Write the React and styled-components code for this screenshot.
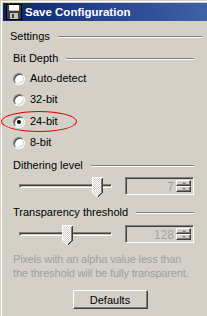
import React from "react";
import styled, { createGlobalStyle } from "styled-components";

const Global = createGlobalStyle`
  html, body { margin: 0; padding: 0; background: #d4d0c8; }
  body { width: 207px; height: 316px; overflow: hidden; font-family: "Liberation Sans", Arial, sans-serif; font-size: 11px; }
`;

const Window = styled.div`
  width: 207px;
  height: 316px;
  box-sizing: border-box;
  background: #d4d0c8;
  border-top: 1px solid #d4d0c8;
  border-left: 1px solid #d4d0c8;
  box-shadow: inset 1px 1px #ffffff;
  padding: 2px 0 0 2px;
  position: relative;
  overflow: hidden;
`;

const TitleBar = styled.div`
  height: 18px;
  display: flex;
  align-items: center;
  gap: 3px;
  padding-left: 3px;
  background: linear-gradient(90deg, #0a246a 0%, #24418a 45%, #3d62a6 100%);
  color: #fff;
  font-weight: bold;
  font-size: 11.5px;
  white-space: nowrap;
`;

const Body = styled.div`
  display: flex;
  flex-direction: column;
  padding: 9px 5px 0 7px;
`;

const Header = styled.div`
  display: flex;
  align-items: center;
  gap: 8px;
  height: 13px;
  margin-top: ${(p) => p.$mt || 0}px;
  line-height: 13px;
  color: #000;
  white-space: nowrap;
`;

const Line = styled.div`
  flex: 1;
  height: 0;
  border-top: 1px solid #808080;
  border-bottom: 1px solid #ffffff;
`;

const Inner = styled.div`
  display: flex;
  flex-direction: column;
  padding-left: 3px;
  padding-right: 8px;
`;

const RadioRow = styled.div`
  position: relative;
  display: flex;
  align-items: center;
  gap: 5px;
  height: 13px;
  margin-top: ${(p) => p.$mt}px;
  line-height: 13px;
`;

const RadioCircle = styled.span`
  width: 12px;
  height: 12px;
  box-sizing: border-box;
  border-radius: 50%;
  border: 1px solid;
  border-color: #808080 #ffffff #ffffff #808080;
  box-shadow: inset 1px 1px #404040, inset -1px -1px #d4d0c8;
  background: #fff;
  display: flex;
  align-items: center;
  justify-content: center;
  &::after {
    content: "";
    width: 4px;
    height: 4px;
    border-radius: 50%;
    background: ${(p) => (p.$checked ? "#000" : "transparent")};
  }
`;

const Ellipse = styled.div`
  position: absolute;
  left: -12px;
  top: -4px;
  width: 74px;
  height: 19px;
  border: 1px solid #e00000;
  border-radius: 50%;
  pointer-events: none;
`;

const SliderRow = styled.div`
  display: flex;
  align-items: flex-start;
  height: 21px;
  margin-top: ${(p) => p.$mt}px;
`;

const Track = styled.div`
  position: relative;
  margin-left: 6px;
  width: 93px;
  height: 21px;
  &::before {
    content: "";
    position: absolute;
    left: 0;
    right: 0;
    top: 7px;
    box-sizing: border-box;
    height: 4px;
    border-top: 1px solid #808080;
    border-left: 1px solid #808080;
    border-bottom: 1px solid #ffffff;
    border-right: 1px solid #ffffff;
    box-shadow: inset 1px 1px #404040;
  }
`;

const Thumb = styled.svg`
  position: absolute;
  top: 0;
`;

const Spin = styled.div`
  margin-left: auto;
  display: flex;
  width: 69px;
  height: 18px;
  box-sizing: border-box;
  border: 1px solid;
  border-color: #808080 #ffffff #ffffff #808080;
  box-shadow: inset 1px 1px #404040, inset -1px -1px #d4d0c8;
  padding: 2px;
`;

const SpinValue = styled.div`
  flex: 1;
  text-align: right;
  color: #a0a0a0;
  font-size: 12px;
  line-height: 14px;
  padding-right: 2px;
`;

const SpinButtons = styled.div`
  width: 15px;
  display: flex;
  flex-direction: column;
`;

const SpinBtn = styled.div`
  flex: 1;
  box-sizing: border-box;
  background: #d4d0c8;
  border: 1px solid;
  border-color: #ffffff #404040 #404040 #ffffff;
  box-shadow: inset -1px -1px #808080;
  display: flex;
  align-items: center;
  justify-content: center;
`;

const Arrow = styled.span`
  width: 0;
  height: 0;
  border-left: 2px solid transparent;
  border-right: 2px solid transparent;
  ${(p) => (p.$down ? "border-top: 2px solid #808080;" : "border-bottom: 2px solid #808080;")}
`;

const Note = styled.div`
  margin-top: ${(p) => p.$mt}px;
  color: #a0a0a0;
  line-height: 14px;
  white-space: nowrap;
  letter-spacing: -0.15px;
`;

const ButtonRow = styled.div`
  display: flex;
  justify-content: center;
  margin-top: 10px;
  padding-left: 8px;
`;

const Button = styled.div`
  width: 75px;
  height: 19px;
  box-sizing: border-box;
  border: 1px solid;
  border-color: #ffffff #404040 #404040 #ffffff;
  box-shadow: inset -1px -1px #808080;
  display: flex;
  align-items: center;
  justify-content: center;
  color: #000;
`;

function Floppy() {
  return (
    <svg width="16" height="16" viewBox="0 0 16 16" shapeRendering="crispEdges">
      <rect x="0" y="0" width="16" height="16" fill="#000" />
      <rect x="1" y="1" width="14" height="14" fill="#404040" />
      <rect x="3" y="1" width="10" height="6" fill="#ffffff" />
      <rect x="3" y="6" width="10" height="1" fill="#c0c0c0" />
      <rect x="4" y="9" width="8" height="6" fill="#c0c0c0" />
      <rect x="6" y="10" width="2" height="4" fill="#404040" />
    </svg>
  );
}

function SliderThumb({ left }) {
  return (
    <Thumb width="11" height="21" viewBox="0 0 11 21" style={{ left }} shapeRendering="crispEdges">
      <defs>
        <pattern id="dith" width="2" height="2" patternUnits="userSpaceOnUse">
          <rect width="2" height="2" fill="#ffffff" />
          <rect width="1" height="1" fill="#d4d0c8" />
          <rect x="1" y="1" width="1" height="1" fill="#d4d0c8" />
        </pattern>
      </defs>
      <polygon points="0.5,0.5 10.5,0.5 10.5,15.5 5.5,20.5 0.5,15.5" fill="url(#dith)" stroke="none" />
      <polyline points="0.5,15.5 0.5,0.5 10.5,0.5" fill="none" stroke="#ffffff" />
      <polyline points="10.5,0.5 10.5,15.5 5.5,20.5" fill="none" stroke="#404040" />
      <polyline points="9.5,1.5 9.5,15.5 5.5,19.5" fill="none" stroke="#808080" />
      <polyline points="0.5,15.5 5.5,20.5" fill="none" stroke="#ffffff" />
    </Thumb>
  );
}

function SpinBox({ value }) {
  return (
    <Spin>
      <SpinValue>{value}</SpinValue>
      <SpinButtons>
        <SpinBtn><Arrow /></SpinBtn>
        <SpinBtn><Arrow $down /></SpinBtn>
      </SpinButtons>
    </Spin>
  );
}

const radios = [
  { label: "Auto-detect", mt: 7 },
  { label: "32-bit", mt: 8 },
  { label: "24-bit", mt: 9, checked: true },
  { label: "8-bit", mt: 8 },
];

export default function App() {
  return (
    <>
      <Global />
      <Window>
        <TitleBar>
          <Floppy />
          <span>Save Configuration</span>
        </TitleBar>
        <Body>
          <Header>
            <span>Settings</span>
            <Line />
          </Header>
          <Inner>
            <Header $mt={9}>
              <span>Bit Depth</span>
              <Line />
            </Header>
            {radios.map((r) => (
              <RadioRow key={r.label} $mt={r.mt}>
                {r.checked && <Ellipse />}
                <RadioCircle $checked={r.checked} />
                <span>{r.label}</span>
              </RadioRow>
            ))}
            <Header $mt={10}>
              <span>Dithering level</span>
              <Line />
            </Header>
            <SliderRow $mt={5}>
              <Track>
                <SliderThumb left={73} />
              </Track>
              <SpinBox value="7" />
            </SliderRow>
            <Header $mt={8}>
              <span>Transparency threshold</span>
              <Line />
            </Header>
            <SliderRow $mt={6}>
              <Track>
                <SliderThumb left={43} />
              </Track>
              <SpinBox value="128" />
            </SliderRow>
            <Note $mt={6}>
              Pixels with an alpha value less than
              <br />
              the threshold will be fully transparent.
            </Note>
          </Inner>
          <ButtonRow>
            <Button>Defaults</Button>
          </ButtonRow>
        </Body>
      </Window>
    </>
  );
}
